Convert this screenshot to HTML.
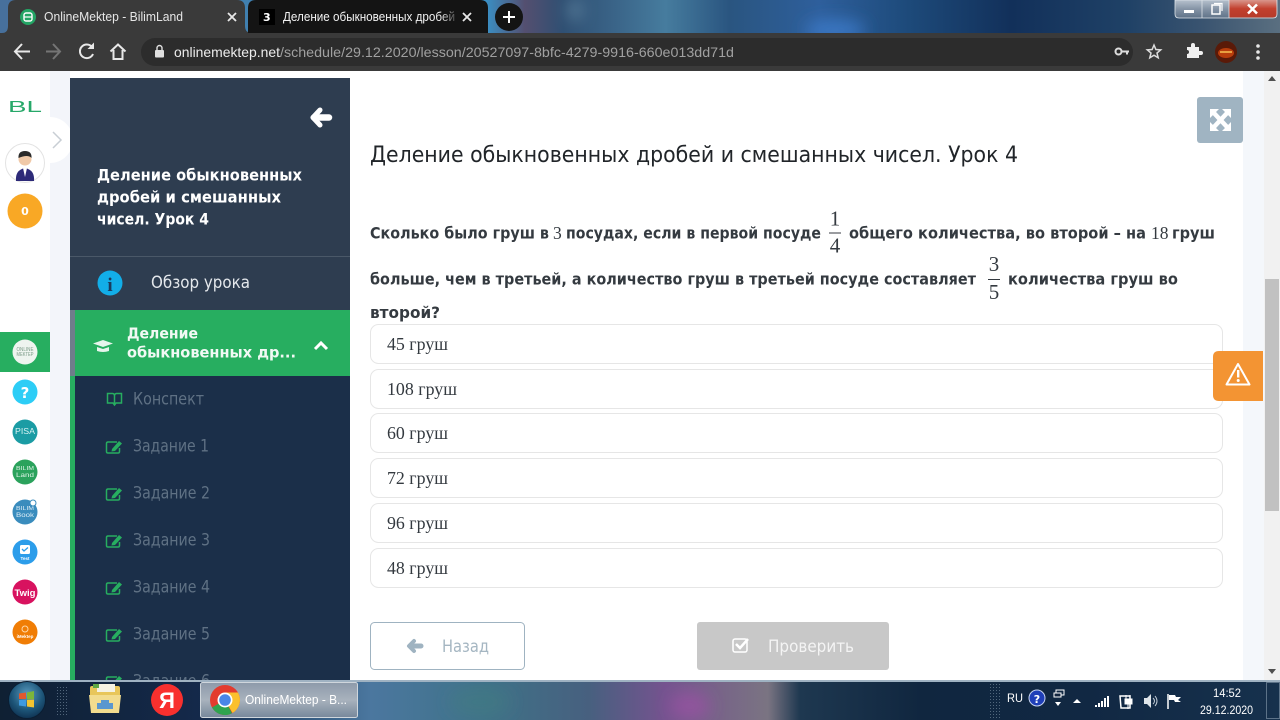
<!DOCTYPE html>
<html><head><meta charset="utf-8"><style>
html,body{margin:0;padding:0;width:1280px;height:720px;overflow:hidden;background:#fff}
svg{display:block}
text{font-family:"DejaVu Sans","Liberation Sans",sans-serif;white-space:pre}
.ls{font-family:"Liberation Sans",sans-serif}
.sf{font-family:"Liberation Serif",serif}
.b{font-weight:bold}
.q{font-weight:bold;font-size:16px;fill:#343a40}
.a{font-family:"Liberation Serif",serif;font-size:18px;fill:#343a40}
.t{font-size:17px;fill:#5f7184;font-family:"DejaVu Sans",sans-serif;font-weight:normal}
</style></head><body>
<svg width="1280" height="720" viewBox="0 0 1280 720" xmlns="http://www.w3.org/2000/svg">
<defs>
<linearGradient id="top" gradientUnits="userSpaceOnUse" x1="0" x2="1280" y1="0" y2="0">
<stop offset="0" stop-color="#47709c"/><stop offset=".38" stop-color="#3a8fc4"/><stop offset=".41" stop-color="#544f70"/><stop offset=".44" stop-color="#2f4f72"/><stop offset=".48" stop-color="#3a6488"/><stop offset=".52" stop-color="#467c9e"/><stop offset=".57" stop-color="#2a5580"/><stop offset=".64" stop-color="#2e5f9c"/><stop offset=".71" stop-color="#1d4a7a"/><stop offset=".79" stop-color="#12305a"/><stop offset=".88" stop-color="#1f4166"/><stop offset=".94" stop-color="#3a5470"/><stop offset="1" stop-color="#5a6f80"/>
</linearGradient>
<linearGradient id="bar" gradientUnits="userSpaceOnUse" x1="0" x2="1280" y1="0" y2="0">
<stop offset="0" stop-color="#0f2033"/><stop offset=".155" stop-color="#14294a"/><stop offset=".22" stop-color="#2b4f74"/><stop offset=".29" stop-color="#4b779f"/><stop offset=".38" stop-color="#3f7288"/><stop offset=".46" stop-color="#47607f"/><stop offset=".52" stop-color="#75538f"/><stop offset=".6" stop-color="#7a7482"/><stop offset=".625" stop-color="#1e3850"/><stop offset=".72" stop-color="#10263f"/><stop offset=".85" stop-color="#112843"/><stop offset="1" stop-color="#16314d"/>
</linearGradient>
<linearGradient id="btn" x1="0" x2="0" y1="0" y2="1"><stop offset="0" stop-color="#8d9aaa"/><stop offset=".5" stop-color="#a8b2bd"/><stop offset="1" stop-color="#77889b"/></linearGradient>
<linearGradient id="wc" x1="0" x2="0" y1="0" y2="1"><stop offset="0" stop-color="#b7c2ce"/><stop offset=".5" stop-color="#8594a6"/><stop offset="1" stop-color="#5f7288"/></linearGradient>
<linearGradient id="wx" x1="0" x2="0" y1="0" y2="1"><stop offset="0" stop-color="#d9968c"/><stop offset=".5" stop-color="#c2402e"/><stop offset="1" stop-color="#b63b2a"/></linearGradient>
<radialGradient id="orb" cx=".5" cy=".35" r=".7"><stop offset="0" stop-color="#5a9cc0"/><stop offset=".6" stop-color="#1d5578"/><stop offset="1" stop-color="#0c2c4b"/></radialGradient>
<filter id="bl"><feGaussianBlur stdDeviation="8"/></filter>
<pattern id="dots" width="3" height="3" patternUnits="userSpaceOnUse"><rect width="1" height="1" fill="#6d8296" opacity=".7"/></pattern>
<clipPath id="cl1"><rect x="0" y="71" width="1280" height="609"/></clipPath>
<linearGradient id="fade" x1="0" x2="1" y1="0" y2="0"><stop offset="0" stop-color="#141414" stop-opacity="0"/><stop offset="1" stop-color="#141414"/></linearGradient>
</defs>

<!-- tab strip -->
<rect width="1280" height="33" fill="url(#top)"/>
<g filter="url(#bl)"><ellipse cx="575" cy="10" rx="6" ry="10" fill="#8fb8cc" opacity=".5"/><ellipse cx="835" cy="30" rx="30" ry="10" fill="#3d7ed0" opacity=".8"/></g>
<path d="M0 33 H1280 V71 H0Z" fill="#3a3a3a"/>
<path d="M2 33 Q8 33 8 26 V8 Q8 0 16 0 H237 Q245 0 245 8 V26 Q245 33 252 33Z" fill="#3a3a3a"/>
<path d="M248 33 V8 Q248 0 256 0 H480 Q488 0 488 8 V33Z" fill="#141414"/>
<circle cx="28" cy="17" r="8" fill="#23a565"/>
<rect x="24" y="13" width="8" height="8" rx="2" fill="none" stroke="#fff" stroke-width="1.4"/><path d="M24 17H32" stroke="#fff" stroke-width="1.2"/>
<text x="44" y="21" class="ls" font-size="13" fill="#e6e6e6" textLength="139" lengthAdjust="spacingAndGlyphs">OnlineMektep - BilimLand</text>
<path d="M228 13l8 8M236 13l-8 8" stroke="#e8e8e8" stroke-width="1.8"/>
<rect x="259" y="9" width="16" height="16" fill="#000"/>
<text x="263" y="21" class="b" font-size="11" fill="#fff">3</text>
<text x="283" y="21" class="ls" font-size="13" fill="#f2f2f2" textLength="172" lengthAdjust="spacingAndGlyphs">Деление обыкновенных дробей</text>
<rect x="440" y="6" width="20" height="22" fill="url(#fade)"/>
<path d="M463 13l8 8M471 13l-8 8" stroke="#e8e8e8" stroke-width="1.8"/>
<circle cx="509" cy="17" r="14" fill="#141414"/>
<path d="M509 11V23M503 17H515" stroke="#fff" stroke-width="2"/>
<!-- window controls -->
<path d="M1175 0V14Q1175 18 1179 18H1273Q1277 18 1277 14V0Z" fill="url(#wc)" stroke="#dfe5ea" stroke-width=".8"/>
<path d="M1229 0H1276.500V14Q1276.500 17.500 1273 17.500H1229Z" fill="url(#wx)"/>
<path d="M1202 0V18" stroke="#dce2e8" stroke-width=".8"/><path d="M1229 0V18" stroke="#dce2e8" stroke-width=".8"/>
<rect x="1184" y="10" width="10" height="3" fill="#fff"/>
<rect x="1212" y="5" width="8" height="9" fill="none" stroke="#fff" stroke-width="1.5"/><path d="M1214 3.500H1222V11" fill="none" stroke="#fff" stroke-width="1.200"/>
<path d="M1248 4.500l9 9M1257 4.500l-9 9" stroke="#fff" stroke-width="2.500"/>

<!-- toolbar -->
<path d="M22 44L15 51.500L22 59M15.500 51.500H30" fill="none" stroke="#e8e8e8" stroke-width="2"/>
<path d="M53 44L60 51.500L53 59M59.500 51.500H46" fill="none" stroke="#757575" stroke-width="2"/>
<path d="M92 47A6.800 6.800 0 1 0 93 54" fill="none" stroke="#e8e8e8" stroke-width="2"/><path d="M94 42.500V49H87.500Z" fill="#e8e8e8"/>
<path d="M110.500 51.500L118 44.500L125.500 51.500M113.500 50V59H122.500V50" fill="none" stroke="#e8e8e8" stroke-width="2"/>
<rect x="141" y="38" width="992" height="28" rx="14" fill="#2c2c2c"/>
<rect x="155" y="50" width="9" height="7.500" rx="1" fill="#e0e0e0"/><path d="M157 50.500V48A2.500 2.500 0 0 1 162 48V50.500" fill="none" stroke="#e0e0e0" stroke-width="1.400"/>
<text x="174" y="57" class="ls" font-size="14" fill="#ececec" textLength="106" lengthAdjust="spacingAndGlyphs">onlinemektep.net</text>
<text x="280" y="57" class="ls" font-size="14" fill="#a0a0a0" textLength="454" lengthAdjust="spacingAndGlyphs">/schedule/29.12.2020/lesson/20527097-8bfc-4279-9916-660e013dd71d</text>
<circle cx="1118.500" cy="51.500" r="3" fill="none" stroke="#ddd" stroke-width="2"/><path d="M1121 51.500H1129M1127 51.500V54.500" stroke="#ddd" stroke-width="2"/>
<path d="M1154 45L1155.900 49.500L1160.700 49.900L1157 53L1158.200 57.800L1154 55.200L1149.800 57.800L1151 53L1147.300 49.900L1152.100 49.500Z" fill="none" stroke="#ddd" stroke-width="1.500"/>
<path d="M1187 48H1191V46A2 2 0 0 1 1195 46V48H1199V52H1201A2 2 0 0 1 1201 56H1199V59H1187V55A2 2 0 0 0 1187 51Z" fill="#f0f0f0" transform="translate(0,-1)"/>
<circle cx="1226" cy="52" r="11" fill="#5a1a08"/><ellipse cx="1226" cy="53" rx="8" ry="5" fill="#b83d0c"/><rect x="1220" y="51" width="12" height="2" fill="#e8a040"/>
<circle cx="1258" cy="46" r="1.800" fill="#e8e8e8"/><circle cx="1258" cy="52" r="1.800" fill="#e8e8e8"/><circle cx="1258" cy="58" r="1.800" fill="#e8e8e8"/>

<!-- page -->
<g clip-path="url(#cl1)">
<rect x="0" y="71" width="1280" height="609" fill="#fff"/>
<rect x="50" y="71" width="20" height="609" fill="#f3f5fa"/>
<rect x="1243" y="71" width="21" height="609" fill="#f4f7fb"/>
<rect x="1264" y="71" width="16" height="609" fill="#f1f1f1"/>
<rect x="1265" y="279" width="14" height="232" fill="#c1c1c1"/>
<path d="M1272 76l-4 5h8Z" fill="#505050"/>
<path d="M1268 669h8l-4 5Z" fill="#505050"/>

<!-- rail -->
<text x="8" y="112" class="ls" font-size="16" fill="#27a869" textLength="34" lengthAdjust="spacingAndGlyphs">BL</text>
<circle cx="50" cy="140" r="23" fill="#fff" opacity=".97"/>
<path d="M53 132L61 140L53 148" fill="none" stroke="#c8ced4" stroke-width="1.500"/>
<circle cx="25" cy="163" r="19.500" fill="#fff" stroke="#e3e3e3"/>
<path d="M16 181Q15 170 25 168Q35 170 34 181Z" fill="#2d2a78"/><path d="M23 168h4l-2 9Z" fill="#fff"/>
<circle cx="25" cy="159" r="6.500" fill="#f0c9a8"/><path d="M18.500 158Q18 151 25 151Q32 151 31.500 158Q28 154 18.500 158Z" fill="#2a2a2a"/>
<circle cx="25" cy="211" r="17.500" fill="#f9a825"/>
<text x="25" y="215" class="b" font-size="11" fill="#fff" text-anchor="middle">0</text>
<rect x="0" y="332" width="50" height="40" fill="#27ae60"/>
<circle cx="25" cy="352" r="12.500" fill="#eef4ef"/>
<text x="25" y="351" class="ls" font-size="5" fill="#7a9a86" text-anchor="middle" textLength="17" lengthAdjust="spacingAndGlyphs">ONLINE</text><text x="25" y="356" class="ls" font-size="5" fill="#7a9a86" text-anchor="middle" textLength="17" lengthAdjust="spacingAndGlyphs">MEKTEP</text>
<circle cx="25" cy="392" r="12.500" fill="#2dcdf6"/><text x="25" y="398" class="b" font-size="15" fill="#fff" text-anchor="middle">?</text>
<circle cx="25" cy="432" r="12.500" fill="#1b9ca4"/><text x="25" y="434" class="ls" font-size="8" fill="#d9f3f4" text-anchor="middle" textLength="20" lengthAdjust="spacingAndGlyphs">PISA</text>
<circle cx="25" cy="472" r="12.500" fill="#2ba25c"/><text x="25" y="470" class="ls" font-size="5.500" fill="#dff3e6" text-anchor="middle" textLength="18" lengthAdjust="spacingAndGlyphs">BILIM</text><text x="25" y="477" class="ls" font-size="6" fill="#dff3e6" text-anchor="middle" textLength="18" lengthAdjust="spacingAndGlyphs">Land</text>
<circle cx="25" cy="512" r="12.500" fill="#3a8cbd"/><text x="25" y="510" class="ls" font-size="5.500" fill="#dcedf6" text-anchor="middle" textLength="18" lengthAdjust="spacingAndGlyphs">BILIM</text><text x="25" y="517" class="ls" font-size="6" fill="#dcedf6" text-anchor="middle" textLength="18" lengthAdjust="spacingAndGlyphs">Book</text><circle cx="33" cy="503" r="3" fill="#fff" stroke="#3a8cbd"/>
<circle cx="25" cy="552" r="12.500" fill="#2c9dea"/><rect x="20" y="545" width="10" height="9" rx="1.500" fill="#fff"/><path d="M22 549l2 2 4-3.500" fill="none" stroke="#2c9dea" stroke-width="1.300"/><text x="25" y="560" class="ls b" font-size="4.500" fill="#fff" text-anchor="middle">Test</text>
<circle cx="25" cy="592" r="12.500" fill="#d8125f"/><text x="25" y="596" class="ls b" font-size="9.500" fill="#fff" text-anchor="middle">Twig</text>
<circle cx="25" cy="632" r="12.500" fill="#f07d05"/><circle cx="25" cy="629" r="3" fill="none" stroke="#ffd9a8"/><text x="25" y="638" class="ls b" font-size="4.500" fill="#fff" text-anchor="middle">iMektep</text>

<!-- sidebar -->
<rect x="70" y="78" width="280" height="232" fill="#2e3d50"/>
<rect x="70" y="256" width="280" height="1" fill="#4a5868"/>
<rect x="70" y="310" width="5" height="66" fill="#6f7d8b"/>
<rect x="75" y="310" width="275" height="66" fill="#27ae60"/>
<rect x="70" y="376" width="5" height="304" fill="#27ae60"/>
<rect x="75" y="376" width="275" height="304" fill="#1b2f49"/>
<path d="M314 117.500H329" stroke="#fff" stroke-width="6.500" stroke-linecap="round"/>
<path d="M320 110L313 117.500L320 125" fill="none" stroke="#fff" stroke-width="5" stroke-linecap="round" stroke-linejoin="round"/>
<text x="97" y="180.500" class="b" font-size="16" fill="#fff" textLength="205" lengthAdjust="spacingAndGlyphs">Деление обыкновенных</text>
<text x="97" y="202.500" class="b" font-size="16" fill="#fff" textLength="184" lengthAdjust="spacingAndGlyphs">дробей и смешанных</text>
<text x="97" y="224.500" class="b" font-size="16" fill="#fff" textLength="112" lengthAdjust="spacingAndGlyphs">чисел. Урок 4</text>
<circle cx="110" cy="283" r="12.500" fill="#12aee8"/>
<text x="110" y="291" class="sf b" font-size="19" fill="#1c3a5c" text-anchor="middle">i</text>
<text x="151" y="288" font-size="17" fill="#e4e8ec" textLength="99" lengthAdjust="spacingAndGlyphs">Обзор урока</text>
<path d="M93 343.500L103 340L113 343.500L103 347Z" fill="#e6f5ec"/><path d="M97 347V351Q103 353 109 351V347L103 349Z" fill="#e6f5ec"/>
<text x="127" y="338.500" class="b" font-size="15.500" fill="#f1f9f4" textLength="71" lengthAdjust="spacingAndGlyphs">Деление</text>
<text x="127" y="357.500" class="b" font-size="15.500" fill="#f1f9f4" textLength="169" lengthAdjust="spacingAndGlyphs">обыкновенных др...</text>
<path d="M315 349L321 343L327 349" fill="none" stroke="#fff" stroke-width="3"/>

<g fill="none" stroke="#27ae60" stroke-width="1.500">
<path d="M114.500 396V405M107.500 393.500H112.500Q114.500 393.500 114.500 396Q114.500 393.500 116.500 393.500H121.500V403H116L114.500 405L113 403H107.500Z"/>
<path d="M117 442H108Q106.500 442 106.500 443.500V451.500Q106.500 453 108 453H118Q119.500 453 119.500 451.500V448"/>
<path d="M117 489H108Q106.500 489 106.500 490.500V498.500Q106.500 500 108 500H118Q119.500 500 119.500 498.500V495"/>
<path d="M117 536H108Q106.500 536 106.500 537.500V545.500Q106.500 547 108 547H118Q119.500 547 119.500 545.500V542"/>
<path d="M117 583H108Q106.500 583 106.500 584.500V592.500Q106.500 594 108 594H118Q119.500 594 119.500 592.500V589"/>
<path d="M117 630H108Q106.500 630 106.500 631.500V639.500Q106.500 641 108 641H118Q119.500 641 119.500 639.500V636"/>
<path d="M117 677H108Q106.500 677 106.500 678.500V686.500Q106.500 688 108 688H118Q119.500 688 119.500 686.500V683"/>
</g>
<g fill="#27ae60">
<path d="M112 449L119 441L122 443.500L115 451L111.500 451.500Z"/>
<path d="M112 496L119 488L122 490.500L115 498L111.500 498.500Z"/>
<path d="M112 543L119 535L122 537.500L115 545L111.500 545.500Z"/>
<path d="M112 590L119 582L122 584.500L115 592L111.500 592.500Z"/>
<path d="M112 637L119 629L122 631.500L115 639L111.500 639.500Z"/>
<path d="M112 684L119 676L122 678.500L115 686L111.500 686.500Z"/>
</g>
<text x="133" y="404.500" class="t" textLength="71" lengthAdjust="spacingAndGlyphs">Конспект</text>
<text x="133" y="451.500" class="t" textLength="76" lengthAdjust="spacingAndGlyphs">Задание 1</text>
<text x="133" y="498.500" class="t" textLength="77" lengthAdjust="spacingAndGlyphs">Задание 2</text>
<text x="133" y="545.500" class="t" textLength="77" lengthAdjust="spacingAndGlyphs">Задание 3</text>
<text x="133" y="592.500" class="t" textLength="77" lengthAdjust="spacingAndGlyphs">Задание 4</text>
<text x="133" y="639.500" class="t" textLength="77" lengthAdjust="spacingAndGlyphs">Задание 5</text>
<text x="133" y="686.500" class="t" textLength="77" lengthAdjust="spacingAndGlyphs">Задание 6</text>

<!-- main -->
<rect x="1197" y="97" width="46" height="46" rx="3" fill="#a0b4c2"/>
<path d="M1213 112L1228 128M1228 112L1213 128" stroke="#fff" stroke-width="4.500"/>
<path d="M1210 109h9l-9 9ZM1231 109v9l-9-9ZM1210 131v-9l9 9ZM1231 131h-9l9-9Z" fill="#fff"/>
<text x="370" y="162" font-size="22" fill="#212529" textLength="648" lengthAdjust="spacingAndGlyphs">Деление обыкновенных дробей и смешанных чисел. Урок 4</text>

<text x="370" y="238.500" class="q" textLength="179" lengthAdjust="spacingAndGlyphs">Сколько было груш в</text>
<text x="553" y="239" class="sf" font-size="17.500" fill="#343a40">3</text>
<text x="566" y="238.500" class="q" textLength="255" lengthAdjust="spacingAndGlyphs">посудах, если в первой посуде</text>
<text x="835" y="225.500" class="sf" font-size="21" fill="#343a40" text-anchor="middle">1</text>
<rect x="829" y="232.500" width="12" height="1" fill="#343a40"/>
<text x="835" y="252.500" class="sf" font-size="21" fill="#343a40" text-anchor="middle">4</text>
<text x="849" y="238.500" class="q" textLength="297" lengthAdjust="spacingAndGlyphs">общего количества, во второй – на</text>
<text x="1151" y="239" class="sf" font-size="17.500" fill="#343a40">18</text>
<text x="1172" y="238.500" class="q" textLength="43" lengthAdjust="spacingAndGlyphs">груш</text>
<text x="370" y="284.500" class="q" textLength="606" lengthAdjust="spacingAndGlyphs">больше, чем в третьей, а количество груш в третьей посуде составляет</text>
<text x="994" y="271" class="sf" font-size="21" fill="#343a40" text-anchor="middle">3</text>
<rect x="988" y="279" width="12" height="1" fill="#343a40"/>
<text x="994" y="299" class="sf" font-size="21" fill="#343a40" text-anchor="middle">5</text>
<text x="1008" y="284.500" class="q" textLength="170" lengthAdjust="spacingAndGlyphs">количества груш во</text>
<text x="370" y="318" class="q" textLength="70" lengthAdjust="spacingAndGlyphs">второй?</text>

<g fill="#fff" stroke="#e6e6e6">
<rect x="370.500" y="324.500" width="852" height="39" rx="8"/>
<rect x="370.500" y="369.500" width="852" height="39" rx="8"/>
<rect x="370.500" y="413.500" width="852" height="39" rx="8"/>
<rect x="370.500" y="458.500" width="852" height="39" rx="8"/>
<rect x="370.500" y="503.500" width="852" height="39" rx="8"/>
<rect x="370.500" y="548.500" width="852" height="39" rx="8"/>
</g>
<text x="387" y="350" class="a" textLength="61" lengthAdjust="spacingAndGlyphs">45 груш</text>
<text x="387" y="395" class="a" textLength="70" lengthAdjust="spacingAndGlyphs">108 груш</text>
<text x="387" y="439" class="a" textLength="61" lengthAdjust="spacingAndGlyphs">60 груш</text>
<text x="387" y="484" class="a" textLength="61" lengthAdjust="spacingAndGlyphs">72 груш</text>
<text x="387" y="529" class="a" textLength="61" lengthAdjust="spacingAndGlyphs">96 груш</text>
<text x="387" y="574" class="a" textLength="61" lengthAdjust="spacingAndGlyphs">48 груш</text>

<path d="M1263 351H1219Q1213 351 1213 357V395Q1213 401 1219 401H1263Z" fill="#f39433"/>
<path d="M1238 364L1249.500 384.500H1226.500Z" fill="none" stroke="#fff" stroke-width="2" stroke-linejoin="round"/>
<rect x="1237" y="370" width="2.400" height="7.500" fill="#fff"/><circle cx="1238.200" cy="380.500" r="1.500" fill="#fff"/>

<rect x="370.500" y="622.500" width="154" height="47" rx="4" fill="#fff" stroke="#9fb3c1"/>
<path d="M411 646H421" stroke="#9fb3c1" stroke-width="5" stroke-linecap="round"/>
<path d="M414 641L409 646L414 651" fill="none" stroke="#9fb3c1" stroke-width="4" stroke-linecap="round" stroke-linejoin="round"/>
<text x="442" y="652" font-size="17" fill="#a5b6c2" textLength="47" lengthAdjust="spacingAndGlyphs">Назад</text>
<rect x="697" y="622" width="192" height="48" rx="3" fill="#c8c8c8"/>
<rect x="733" y="639" width="14" height="13" rx="2" fill="none" stroke="#fff" stroke-width="1.500"/>
<path d="M736 644L740 648L748 639" fill="none" stroke="#fff" stroke-width="2.500"/>
<text x="768" y="652" font-size="17" fill="#f4f4f4" textLength="86" lengthAdjust="spacingAndGlyphs">Проверить</text>
</g>

<!-- taskbar -->
<rect x="0" y="680" width="1280" height="40" fill="url(#bar)"/>
<g filter="url(#bl)"><ellipse cx="690" cy="706" rx="20" ry="14" fill="#a14fa8" opacity=".6"/><ellipse cx="480" cy="702" rx="30" ry="14" fill="#3f7b82" opacity=".5"/></g>
<rect x="0" y="680" width="1280" height="2" fill="#9fb2c2"/>
<circle cx="27" cy="700" r="18.500" fill="url(#orb)" stroke="#0a1e33"/>
<path d="M19 693.500l7-1v6.500h-7Z" fill="#e0582f"/><path d="M27 692.500l7-1.500v8l-7 .5Z" fill="#7cb53a"/><path d="M19 700h7v6.500l-7-1Z" fill="#3f9ae0"/><path d="M27 700l7-.5v8l-7-1Z" fill="#f4c430"/>
<rect x="57" y="686" width="10" height="30" fill="url(#dots)"/>
<path d="M90 696V688Q90 686 92 686H118Q120 686 120 688V696Z" fill="#e8c65a"/>
<rect x="97" y="684" width="18" height="8" fill="#f5f2e3"/><rect x="93" y="684" width="6" height="4" fill="#5fa844"/>
<path d="M89 695H121L119 713H91Z" fill="#f2dc8e"/>
<rect x="97" y="703" width="16" height="6" fill="#5a97cf"/><rect x="101" y="700" width="8" height="3" fill="#5a97cf"/>
<circle cx="167" cy="700" r="16" fill="#f8302e"/>
<text x="167" y="708" class="ls b" font-size="22" fill="#fff" text-anchor="middle">Я</text>
<rect x="200.500" y="682.500" width="157" height="35" rx="2" fill="url(#btn)" stroke="#cfd6dc"/>
<circle cx="225" cy="700" r="15" fill="#e33b2e"/>
<path d="M225 700L212 707.500A15 15 0 0 0 232 713.300Z" fill="#2fa34f"/>
<path d="M225 700L232.500 713A15 15 0 0 0 238 692.500H225Z" fill="#fbc02d"/>
<circle cx="225" cy="700" r="7.500" fill="#fff"/><circle cx="225" cy="700" r="5.800" fill="#4a86e8"/>
<text x="245" y="704" class="ls" font-size="12.500" fill="#fff" textLength="102" lengthAdjust="spacingAndGlyphs">OnlineMektep - B...</text>
<rect x="990" y="684" width="11" height="34" fill="url(#dots)"/>
<text x="1007" y="702" class="ls" font-size="12" fill="#fff" textLength="16" lengthAdjust="spacingAndGlyphs">RU</text>
<circle cx="1037" cy="698" r="8" fill="#1f3fb8" stroke="#c7d4f0"/><text x="1037" y="703" class="b" font-size="11" fill="#fff" text-anchor="middle">?</text>
<rect x="1056" y="690" width="8" height="5" fill="none" stroke="#fff"/><rect x="1054" y="693" width="7" height="4" fill="#13263f" stroke="#fff"/>
<path d="M1055 702h6l-3 4Z" fill="#fff"/>
<path d="M1073 703h8l-4-4Z" fill="#fff"/>
<g fill="#fff"><rect x="1095" y="705" width="2" height="2"/><rect x="1098" y="703" width="2" height="4"/><rect x="1101" y="701" width="2" height="6"/><rect x="1104" y="698" width="2" height="9"/><rect x="1107" y="696" width="2" height="11"/></g>
<path d="M1120 696H1130V708H1121Z" fill="none" stroke="#fff" stroke-width="1.500"/><path d="M1125 699H1132V704H1125Z M1126 695v4M1130 695v4M1128 704v5" fill="#fff" stroke="#fff"/>
<path d="M1144 698H1147L1151 694V708L1147 704H1144Z" fill="#dfe5ea"/><path d="M1153 698Q1156 701 1153 704M1155 696Q1159 701 1155 706" fill="none" stroke="#c2ccd6"/>
<path d="M1168 694V709" stroke="#fff" stroke-width="1.500"/><path d="M1169 695H1175L1176 697H1181L1178 700L1181 702H1175L1174 700H1169Z" fill="#fff"/>
<text x="1227" y="697" class="ls" font-size="12" fill="#fff" text-anchor="middle" textLength="28" lengthAdjust="spacingAndGlyphs">14:52</text>
<text x="1226.500" y="714" class="ls" font-size="12" fill="#fff" text-anchor="middle" textLength="53" lengthAdjust="spacingAndGlyphs">29.12.2020</text>
<rect x="1266.500" y="682.500" width="13" height="36" fill="none" stroke="#5c7288"/>
</svg>
</body></html>
